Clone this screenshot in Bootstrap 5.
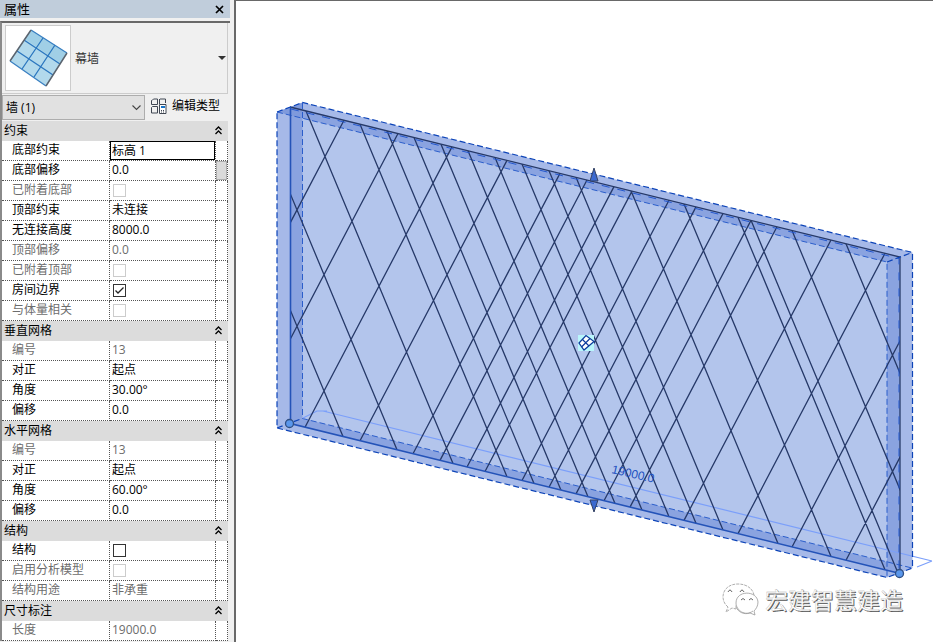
<!DOCTYPE html>
<html lang="zh-CN">
<head>
<meta charset="utf-8">
<meta name="viewport" content="width=device-width, initial-scale=1">
<title>属性</title>
<link href="https://cdn.jsdelivr.net/npm/bootstrap@5.3.0/dist/css/bootstrap.min.css" rel="stylesheet">
<style>
  body { font-family: "Open Sans", "Noto Sans CJK SC", sans-serif; font-size: 12px; line-height: 16px; color: #000; background: #fff; }
  .side { width: 236px; background: #f0f0f0; border-right: 2px solid #696969; }
  .side-inner { width: 230px; }
  .title-bar { height: 18px; background: #c0cddb; font-size: 13px; padding: 0 4px; }
  .close-btn { width: 14px; height: 18px; }
  .panel { margin-top: 3px; border-top: 2px solid #696969; border-left: 2px solid #8a8a8a; }
  .type-box { height: 71px; padding: 2px 1px 2px 3px; border-bottom: 1px solid #ccc; border-right: 1px solid #ccc; width: 226px; }
  .thumb { width: 66px; height: 66px; background: #fff; border: 1px solid #ccc; }
  .type-name { color: #333; padding-top: 2px; }
  .filter-row { height: 27px; width: 226px; }
  .filter-box { width: 143px; height: 25px; margin-top: 1px; }
  .filter-box select { appearance: none; border: 1px solid #adadad; background: #e1e1e1; width: 100%; height: 25px; padding: 0 3px; color: #000; }
  .filter-box svg { right: 4px; top: 10px; }
  .edit-btn { font-size: 12px; line-height: 16px; margin: 3px 0 0 5px; }
  .props { width: 226px; table-layout: fixed; border-collapse: separate; border-spacing: 0; background: #fff; }
  .col-name { width: 108px; }
  .col-value { width: 106px; }
  .props tr { height: 20px; }
  .props td { height: 20px; padding: 0 0 0 2px; border-bottom: 1px dotted #555; border-right: 1px dotted #555; line-height: 18px; white-space: nowrap; vertical-align: top; }
  .props td:first-child { padding-left: 10px; }
  .props td:last-child { padding: 0; }
  .props th { height: 20px; background: #dcdcdc; padding: 0 6px 0 2px; font-weight: 400; line-height: 18px; }
  .props th svg { margin-bottom: 2px; }
  .props .off { color: #6d6d6d; }
  .props .field-cell { padding: 0; }
  .field-cell input { width: 100%; height: 19px; border: 1px solid #000; padding: 0 1px 2px; outline: 0; }
  .props input[type=checkbox] { appearance: none; width: 13px; height: 13px; border: 1px solid #333; margin: 3px 0 0 1px; background: #fff; }
  .props input[type=checkbox]:disabled { border-color: #ccc; }
  .props input[type=checkbox]:checked { background: #fff url("data:image/svg+xml,%3Csvg xmlns='http://www.w3.org/2000/svg' viewBox='0 0 11 11'%3E%3Cpath d='M1.5 5.5 4 8 9.5 2.5' fill='none' stroke='%23222' stroke-width='1.3'/%3E%3C/svg%3E"); }
  .scroll-thumb { width: 11px; height: 19px; background: #dadada; border: 1px solid #adadad; }
  .view { border-top: 1px solid #696969; min-width: 0; }
  .grid-lines { stroke: #263968; stroke-width: 1.3; fill: none; }
  .edge { stroke: #0d44b8; stroke-width: 1.2; stroke-dasharray: 6 3; fill: none; }
  .edge-in { stroke: #2b5ecb; stroke-width: 1; stroke-dasharray: 6 3; fill: none; }
  .dim { stroke: #7b9ffa; stroke-width: 1.2; fill: none; }
  .dim-text { font: 12px "Liberation Sans", sans-serif; fill: #1d50c0; }
  .wm-text { font: 23px "Noto Sans CJK SC", sans-serif; }
</style>
<script src="https://cdn.jsdelivr.net/npm/bootstrap@5.3.0/dist/js/bootstrap.bundle.min.js"></script>
</head>
<body>
<div class="d-flex vh-100 overflow-hidden">
  <aside class="side flex-shrink-0">
    <div class="side-inner">
      <header class="title-bar d-flex justify-content-between align-items-center">
        <span>属性</span>
        <button type="button" class="close-btn btn p-0 border-0 rounded-0 d-flex align-items-center justify-content-center" aria-label="关闭">
          <svg width="9" height="9" viewBox="0 0 9 9"><path d="M1 1l7 7M8 1 1 8" stroke="#000" stroke-width="1.7"/></svg>
        </button>
      </header>
      <div class="panel">
        <div class="type-box d-flex align-items-center">
          <div class="thumb flex-shrink-0">
            <svg width="64" height="64" viewBox="6 26 64 64">
              <path d="M31 30 67 53 46 86 10 61Z" fill="#b2d9ec"/>
              <path d="M31 30 67 53 60 63 25 39Z" fill="#a0cfe6"/>
              <path d="M43 38 22 69M55 45 34 77M24 40 60 64M17 51 53 75" stroke="#2a76bf" stroke-width="1.3" fill="none"/>
              <path d="M31 30 67 53M10 61 46 86" stroke="#3a80c2" stroke-width="1.3"/>
              <path d="M31 30 10 61M67 53 46 86" stroke="#5a646f" stroke-width="1.5"/>
            </svg>
          </div>
          <span class="type-name ms-1 flex-grow-1">幕墙</span>
          <svg width="8" height="4" viewBox="0 0 8 4"><path d="M0 0h8L4 4z" fill="#333"/></svg>
        </div>
        <div class="filter-row d-flex align-items-start">
          <div class="filter-box position-relative flex-shrink-0">
            <select aria-label="类别"><option>墙 (1)</option></select>
            <svg class="position-absolute" width="9" height="6" viewBox="0 0 9 6"><path d="M.5.5l4 4 4-4" fill="none" stroke="#444" stroke-width="1.1"/></svg>
          </div>
          <button type="button" class="edit-btn btn p-0 border-0 rounded-0 d-flex align-items-center gap-1">
            <svg width="18" height="18" viewBox="150 96 18 18" fill="none" stroke="#3f4652">
              <path d="M152 99.500l1.500-1.500h4v5.500h-6v-4zM160 98h5.500v4M159.500 103v-5M151.500 106.500l1-1h5v6.500h-6zM151.500 101h-.5M151.500 109h-.5"/>
              <path d="M159.500 103.500h6.500v9h-6.500z" fill="#fff"/><path d="M161 106h4" stroke="#1774c8" stroke-width="2"/><path d="M161 109.500h4M161 111h4" stroke-dasharray="1 1"/>
            </svg>
            <span class="text-black">编辑类型</span>
          </button>
        </div>
        <table class="props mb-0">
          <colgroup><col class="col-name"><col class="col-value"><col></colgroup>
          <tbody id="props"></tbody>
        </table>
      </div>
    </div>
  </aside>
  <main class="view flex-grow-1">
    <svg class="d-block w-100" viewBox="236 1 697 641" role="img" aria-label="幕墙三维视图">
      <defs><clipPath id="wall"><path d="M290 107 900 257V573.500L290 423.500Z"/></clipPath></defs>
      <path d="M277 112 302.500 102.500 912.500 252.500V568L887 577.500 277 428Z" fill="#a6b9e8"/>
      <path d="M290 107 900 257V573.500L290 423.500Z" fill="#8aa3e0"/>
      <path d="M277 112 302.500 102.500V118.300L290 115.200Z" fill="#7f9adc"/>
      <path d="M302.500 118.300 887 262V562L302.500 418.500Z" fill="#b3c5ec"/>
      <path class="edge-in" d="M302.500 103V418.500L912 568M277 112 887 262V577"/>
      <path class="dim" d="M303 418 317 411 327 411M323 411 932 561M932 561 917 567"/>
      <g clip-path="url(#wall)"><path id="mullions" class="grid-lines"/></g>
      <path class="grid-lines" d="M290 107 900 257V573"/>
      <path d="M290.500 107V423.500L900 573.500" stroke="#2453b8" stroke-width="1.600" fill="none"/>
      <path d="M291 109 899 258.500V573" stroke="#2458ce" stroke-width="1" stroke-dasharray="8 8" fill="none"/>
      <path class="edge" d="M277 112 302.500 102.500 912.500 252.500V568L887 577.500 277 428ZM887 262 912 252.500M277 428 302 418.500"/>
      <path d="M594 168 598 181H590ZM590 500H598L594 512Z" fill="#3b69d0" stroke="#354365"/>
      <circle cx="289.500" cy="423.500" r="4" fill="#5a97ec" stroke="#304f83" stroke-width="1.300"/>
      <circle cx="899.500" cy="573.500" r="4" fill="#5a97ec" stroke="#304f83" stroke-width="1.300"/>
      <path d="M578 335h16v16h-16z" fill="#b9f6fb"/>
      <path d="M579 343 586 335.500 594 341.500 584 350Z" fill="#fff" stroke="#0a3a9c" stroke-width="1.200"/>
      <path d="M582.500 339.500 589 346M590 338.500 581.500 347" fill="none" stroke="#0a3a9c" stroke-width="1.200"/>
      <text class="dim-text" transform="translate(611 473) rotate(13)">19000.0</text>
      <g fill="#fff" stroke="#999" stroke-width=".8" stroke-dasharray="3 1">
        <path d="M728 607c-9-7-6-23 10-23 9 0 15 5 16 11-10-1-19 6-18 14l-4-1-6 4z"/>
        <path d="M753 611c-8 6-17-1-17-8 0-13 21-13 22-1 0 4-2 7-4 9l1 4-5-2c-6 2-12-1-14-6" stroke-dasharray="none"/>
      </g>
      <path d="M728 592q2-4 4 0M740 592q2-4 4 0M741 600q2-3 4 0M749 600q2-3 4 0" fill="none" stroke="#666" stroke-width="1"/>
      <text class="wm-text" x="766" y="610" fill="#555">宏建智慧建造</text>
      <text class="wm-text" x="765" y="609" fill="#fff" stroke="#aaa" stroke-width=".3" aria-hidden="true">宏建智慧建造</text>
    </svg>
  </main>
</div>
<script>
  // [label, value, disabled]; a value of true/false is a tick box, a single string is a group heading
  const rows = [
    "约束", ["底部约束", "标高 1"], ["底部偏移", "0.0"], ["已附着底部", false, 1], ["顶部约束", "未连接"],
    ["无连接高度", "8000.0"], ["顶部偏移", "0.0", 1], ["已附着顶部", false, 1], ["房间边界", true], ["与体量相关", false, 1],
    "垂直网格", ["编号", "13", 1], ["对正", "起点"], ["角度", "30.00°"], ["偏移", "0.0"],
    "水平网格", ["编号", "13", 1], ["对正", "起点"], ["角度", "60.00°"], ["偏移", "0.0"],
    "结构", ["结构", false], ["启用分析模型", false, 1], ["结构用途", "非承重", 1],
    "尺寸标注", ["长度", "19000.0", 1]
  ];
  const chevrons = '<svg width="7" height="9" viewBox="0 0 7 9"><path d="M.5 4l3-3 3 3M.5 8l3-3 3 3" fill="none" stroke="#000" stroke-width="1.300"/></svg>';
  document.getElementById("props").innerHTML = rows.map((r, i) => {
    if (typeof r === "string")
      return `<tr><th colspan="3" scope="colgroup"><div class="d-flex justify-content-between align-items-center"><span>${r}</span>${chevrons}</div></th></tr>`;
    const [name, value, off] = r, id = "p" + i;
    const tick = typeof value === "boolean", field = i === 1;
    const label = tick || field ? `<label for="${id}">${name}</label>` : name;
    const cell = tick ? `<input type="checkbox" class="d-block" id="${id}"${value ? " checked" : ""}${off ? " disabled" : ""}>`
      : field ? `<input type="text" class="d-block" id="${id}" value="${value}">` : value;
    return `<tr><td class="${off ? "off" : ""}">${label}</td><td class="${off ? "off" : ""}${field ? "field-cell" : ""}">${cell}</td><td>${i === 2 ? '<div class="scroll-thumb"></div>' : ""}</td></tr>`;
  }).join("");

  // Wall grid: each line is given by its x on the top edge and runs to the bottom edge
  const top_ = x => 107 + (x - 290) * 0.2459, H = 316.5, run = 147;
  const right = [196, 250, 306, 360, 387, 414, 441, 468, 495, 522, 549, 576, 631, 684, 738, 751, 792, 846];
  const left = [344, 398, 452, 507, 560, 587, 614, 632, 669, 696, 723, 751, 777, 831, 885, 939, 993];
  const line = (x, s) => `M${x} ${top_(x)}L${x + s * run} ${top_(x + s * run) + H}`;
  document.getElementById("mullions").setAttribute("d", right.map(x => line(x, 1)).concat(left.map(x => line(x, -1))).join(""));
</script>
</body>
</html>
